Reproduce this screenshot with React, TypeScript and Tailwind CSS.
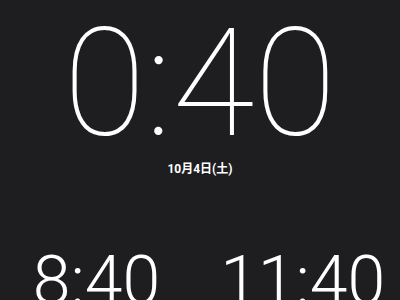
import React from 'react';

const App: React.FC = () => {
  return (
    <div className="w-[400px] h-[300px] overflow-hidden bg-[#1e1e20] text-white flex flex-col items-center font-['Roboto',sans-serif]">
      <div className="mt-[9px] h-[150px] flex items-center justify-center text-[150px] leading-none font-thin">
        0:40
      </div>
      <div className="mt-[4px] text-[12px] font-bold leading-none font-['Roboto','Noto_Sans_CJK_JP',sans-serif]">
        10月4日(土)
      </div>
      <div className="mt-[72px] w-full flex justify-center gap-[60px] pl-[18px] text-[68px] leading-none font-light">
        <span>8:40</span>
        <span>11:40</span>
      </div>
    </div>
  );
};

export default App;
